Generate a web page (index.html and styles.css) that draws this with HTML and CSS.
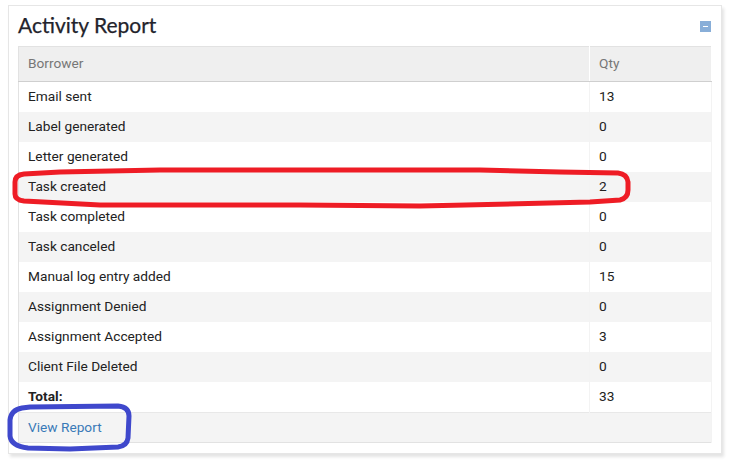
FILE: index.html
```html
<!DOCTYPE html>
<html lang="en">
<head>
  <meta charset="UTF-8">
  <title>Activity Report</title>
  <link rel="stylesheet" href="styles.css">
</head>
<body>
  <div class="panel">
    <div class="panel-head">
      <h2>Activity Report</h2>
      <span class="collapse"></span>
    </div>
    <table class="report">
      <thead>
        <tr><th>Borrower</th><th>Qty</th></tr>
      </thead>
      <tbody>
        <tr><td>Email sent</td><td>13</td></tr>
        <tr><td>Label generated</td><td>0</td></tr>
        <tr><td>Letter generated</td><td>0</td></tr>
        <tr><td>Task created</td><td>2</td></tr>
        <tr><td>Task completed</td><td>0</td></tr>
        <tr><td>Task canceled</td><td>0</td></tr>
        <tr><td>Manual log entry added</td><td>15</td></tr>
        <tr><td>Assignment Denied</td><td>0</td></tr>
        <tr><td>Assignment Accepted</td><td>3</td></tr>
        <tr><td>Client File Deleted</td><td>0</td></tr>
        <tr class="total"><td>Total:</td><td>33</td></tr>
      </tbody>
      <tfoot>
        <tr><td colspan="2"><a href="#">View Report</a></td></tr>
      </tfoot>
    </table>
  </div>

  <!-- hand drawn marks over the screenshot -->
  <svg class="marks" width="737" height="472" viewBox="0 0 737 472">
    <path class="red" d="M60 172 L24 174 Q15 175 15 182 L15 194 Q15 200 24 201 L100 205 L300 205 L420 206 L590 202 L620 200 Q628 198 628 190 L628 182 Q627 174 618 173 L560 172 L480 170 L300 170 L160 170 Z"/>
    <path class="blue" d="M30 407 L118 406 Q129 407 129 416 L128 438 Q127 446 118 447 L70 449 L28 448 Q11 446 10 436 L10 420 Q11 410 22 408 Z"/>
  </svg>
</body>
</html>
```

FILE: styles.css
```css
* {
  box-sizing: border-box;
}

body {
  margin: 0;
  background: #fff;
  font-family: "Roboto", sans-serif;
  color: #222;
  position: relative;
  width: 737px;
  height: 472px;
  overflow: hidden;
}

.panel {
  width: 714px;
  height: 449px;
  margin: 5px 0 0 8px;
  padding: 0 9px;
  background: #fff;
  border: 1px solid #e6e6e6;
  box-shadow: 2px 3px 3px #e4e4e4;
}

.panel-head {
  height: 40px;
  display: flex;
  align-items: flex-start;
  justify-content: space-between;
}

.panel-head h2 {
  margin: 5px 0 0;
  font-size: 21px;
  font-family: "Lato", sans-serif;
  font-weight: 400;
  line-height: 28px;
  color: #23232b;
  -webkit-text-stroke: 0.25px #23232b;
}

.collapse {
  width: 11px;
  height: 11px;
  margin: 15px 1px 0 0;
  background: #88aed8;
  display: flex;
  align-items: center;
  justify-content: center;
}

.collapse::before {
  content: '';
  width: 5px;
  height: 1px;
  background: #fff;
}

.report {
  width: 694px;
  border-collapse: collapse;
  table-layout: fixed;
  border: 1px solid #e2e2e2;
  font-size: 13.7px;
}

.report th,
.report td {
  padding: 0 9px 2px;
  text-align: left;
  height: 30px;
  border-right: 1px solid #f3f3f3;
}

.report th {
  height: 35px;
  font-weight: 400;
  color: #777;
  background: #efefef;
  border-bottom: 1px solid #cfcfcf;
  border-right: 1px solid #fff;
}

.report th:first-child {
  width: 571px;
}

.report tbody tr:nth-child(even) td {
  background: #f4f4f4;
}

.report .total td {
  height: 31px;
  padding-top: 1px;
}

.report .total td:first-child {
  font-weight: 700;
}

.report tfoot td {
  background: #f4f4f4;
  border-top: 1px solid #e8e8e8;
}

.report a {
  color: #3a7ab8;
  text-decoration: none;
}

.marks {
  position: absolute;
  left: 0;
  top: 0;
  fill: none;
  stroke-width: 5;
}

.red {
  stroke: #ee1c25;
}

.blue {
  stroke: #3f48cc;
}
```
